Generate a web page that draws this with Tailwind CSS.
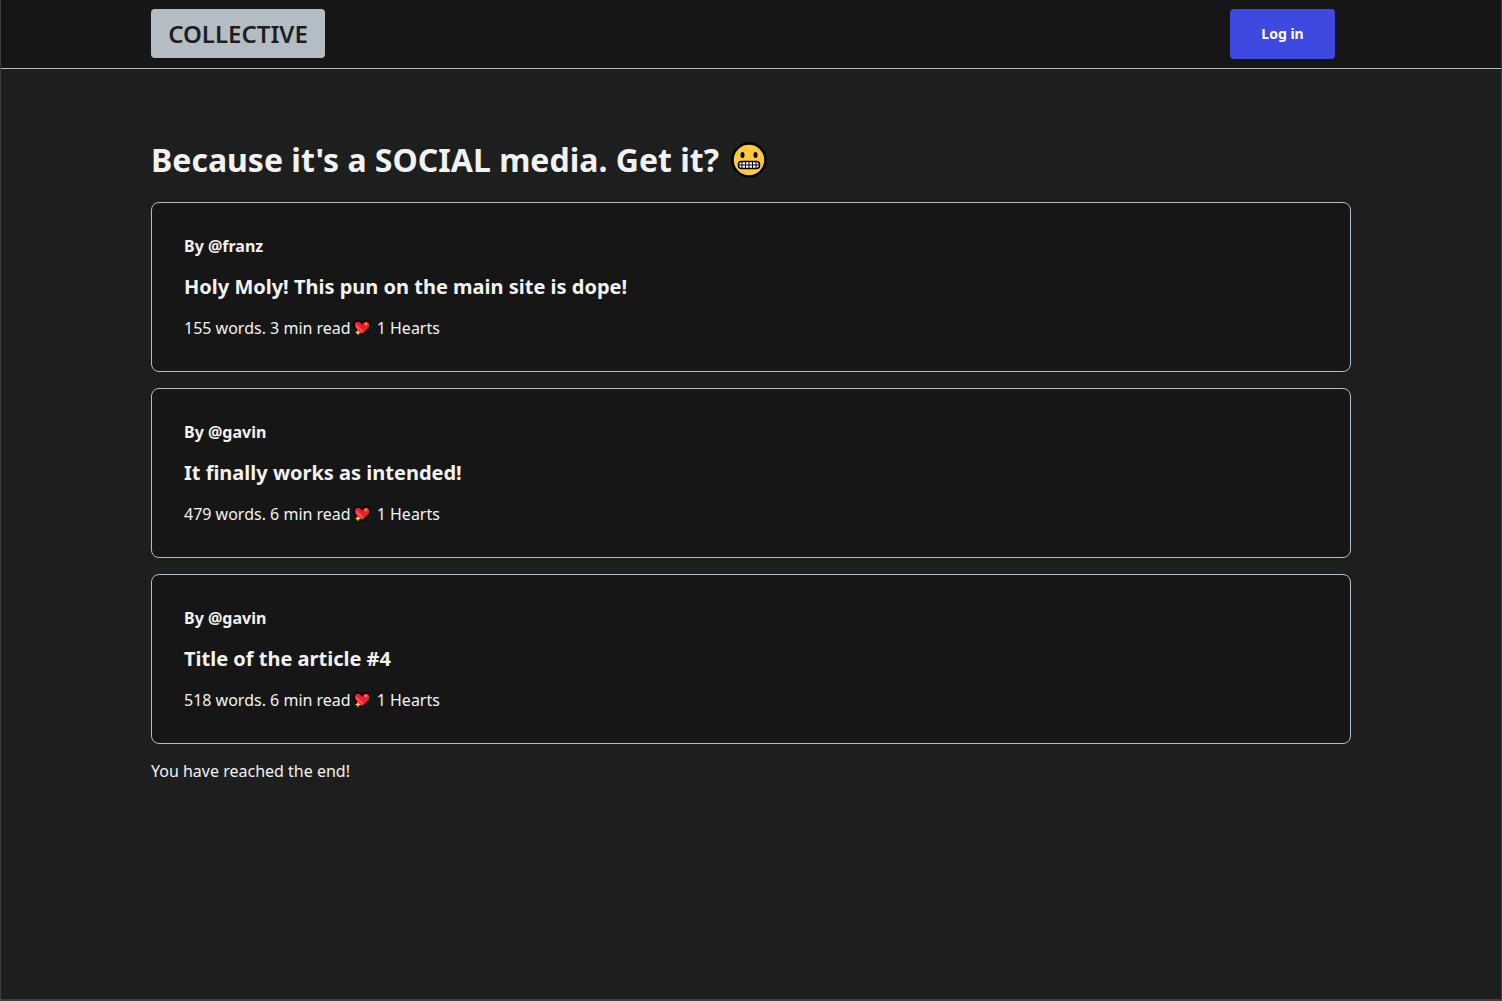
<!DOCTYPE html>
<html lang="en">
<head>
<meta charset="utf-8">
<meta name="viewport" content="width=device-width, initial-scale=1">
<title>Collective</title>
<script src="https://cdn.jsdelivr.net/npm/@tailwindcss/browser@4"></script>
</head>
<body class="flex min-h-screen flex-col border-x border-b-2 border-[#3f3d45] bg-[#1d1f1e] font-['Noto_Sans',sans-serif] text-base text-[#f2f2f2]">
<svg class="hidden" aria-hidden="true">
  <symbol id="heart" viewBox="0 0 18 18">
    <path d="M9 16C6 13.500 1 10 1 6.200C1 3.500 3 2 5 2C7 2 8.300 3 9 4.300C9.700 3 11 2 13 2C15 2 17 3.500 17 6.200C17 10 12 13.500 9 16Z" fill="#ee1c2e" stroke="#000" stroke-width="1.500"/>
    <path d="M3.500 5L10.500 12L9 13.500L3 8Z" fill="#f4505c"/>
    <path d="M13 3L13.500 4.500L15 5L13.500 5.500L13 7L12.500 5.500L11 5L12.500 4.500ZM5 10.500L5.900 12.600L8 13.500L5.900 14.400L5 16.500L4.100 14.400L2 13.500L4.100 12.600Z" fill="#ffd42a"/>
  </symbol>
</svg>
<header class="border-b border-[#b5bdc4] bg-[#161616] pt-[9px] pb-[9px]">
  <div class="mx-auto flex max-w-[1200px] items-start justify-between pr-4">
    <a href="#" class="min-w-[174px] rounded bg-[#b5bdc4] px-4 py-2 text-center text-2xl leading-[33px] font-semibold text-[#1d1f1e]">COLLECTIVE</a>
    <button type="button" class="h-[50px] min-w-[105px] rounded bg-[#3d49df] px-6 text-sm font-bold text-white">Log in</button>
  </div>
</header>
<main class="mx-auto w-full max-w-[1200px] pt-[68px]">
  <h1 class="flex items-center gap-3 text-[32px] leading-[46px] font-bold">Because it's a SOCIAL media. Get it?
    <svg class="size-9" viewBox="0 0 36 36" role="img" aria-label="Grimacing face">
      <circle cx="18" cy="18" r="16.500" fill="#ffc83d" stroke="#000" stroke-width="2.500"/>
      <ellipse cx="11.500" cy="13" rx="2" ry="3"/><ellipse cx="24.500" cy="13" rx="2" ry="3"/>
      <rect x="7.500" y="19.500" width="21" height="7" rx="3" fill="#fff" stroke="#000" stroke-width="1.500"/>
      <path d="M7.500 23H28.500M11 19.500V26.500M14.500 19.500V26.500M18 19.500V26.500M21.500 19.500V26.500M25 19.500V26.500" stroke="#000" stroke-width="1"/>
    </svg>
  </h1>
  <div class="mt-[19px] flex flex-col gap-4">
    <article class="flex flex-col gap-4 rounded-lg border border-[#b5bdc4] bg-[#161616] p-8">
      <p class="leading-[22px] font-bold">By @franz</p>
      <h2 class="text-xl leading-[28px] font-bold">Holy Moly! This pun on the main site is dope!</h2>
      <p class="flex items-center leading-[22px]">155 words. 3 min read<svg class="mr-1.5 ml-0.5 size-[18px]" aria-hidden="true"><use href="#heart"/></svg>1 Hearts</p>
    </article>
    <article class="flex flex-col gap-4 rounded-lg border border-[#b5bdc4] bg-[#161616] p-8">
      <p class="leading-[22px] font-bold">By @gavin</p>
      <h2 class="text-xl leading-[28px] font-bold">It finally works as intended!</h2>
      <p class="flex items-center leading-[22px]">479 words. 6 min read<svg class="mr-1.5 ml-0.5 size-[18px]" aria-hidden="true"><use href="#heart"/></svg>1 Hearts</p>
    </article>
    <article class="flex flex-col gap-4 rounded-lg border border-[#b5bdc4] bg-[#161616] p-8">
      <p class="leading-[22px] font-bold">By @gavin</p>
      <h2 class="text-xl leading-[28px] font-bold">Title of the article #4</h2>
      <p class="flex items-center leading-[22px]">518 words. 6 min read<svg class="mr-1.5 ml-0.5 size-[18px]" aria-hidden="true"><use href="#heart"/></svg>1 Hearts</p>
    </article>
    <p class="leading-[22px]">You have reached the end!</p>
  </div>
</main>
</body>
</html>
